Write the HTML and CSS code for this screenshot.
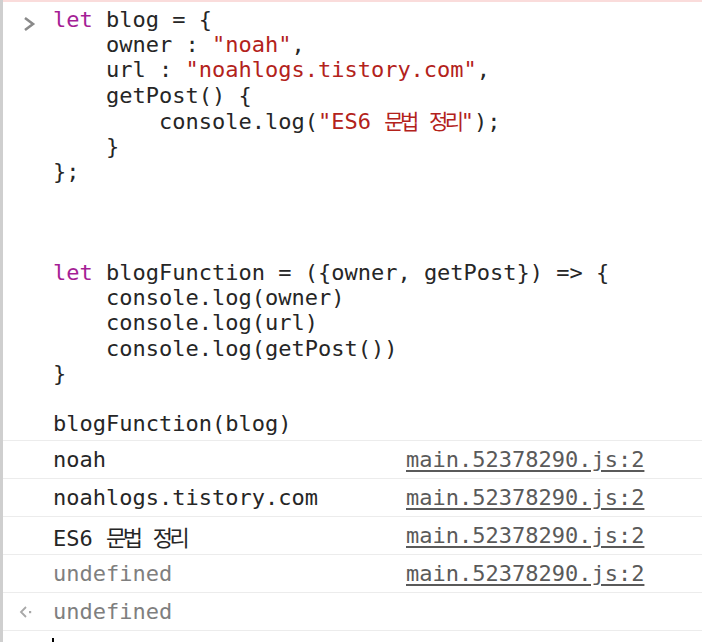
FILE: index.html
```html
<!DOCTYPE html>
<html lang="ko">
<head>
<meta charset="utf-8">
<link rel="stylesheet" href="styles.css">
</head>
<body>
<div class="console">
  <div class="input-group">
    <svg class="prompt" width="14" height="16" viewBox="0 0 14 16"><polyline points="2,2 10,8 2,14" fill="none" stroke="#8a8a8a" stroke-width="2.6"/></svg>
<pre class="code"><span class="kw">let</span> blog = {
    owner : <span class="str">"noah"</span>,
    url : <span class="str">"noahlogs.tistory.com"</span>,
    getPost() {
        console.log(<span class="str">"ES6 <span class="ko ko-code">문법</span> <span class="ko ko-code">정리</span>"</span>);
    }
};



<span class="kw">let</span> blogFunction = ({owner, getPost}) =&gt; {
    console.log(owner)
    console.log(url)
    console.log(getPost())
}

blogFunction(blog)</pre>
  </div>
  <div class="row"><span class="msg">noah</span><a class="src">main.52378290.js:2</a></div>
  <div class="row"><span class="msg">noahlogs.tistory.com</span><a class="src">main.52378290.js:2</a></div>
  <div class="row"><span class="msg">ES6 <span class="ko">문법</span> <span class="ko">정리</span></span><a class="src">main.52378290.js:2</a></div>
  <div class="row"><span class="msg undef">undefined</span><a class="src">main.52378290.js:2</a></div>
  <div class="row result">
    <svg class="ret" width="16" height="14" viewBox="0 0 16 14"><polyline points="7,2 2,7 7,12" fill="none" stroke="#a8a8a8" stroke-width="1.8"/><rect x="10" y="6" width="2.2" height="2.2" fill="#a8a8a8"/></svg>
    <span class="msg undef">undefined</span>
  </div>
  <div class="prompt-line"><span class="cursor"></span></div>
</div>
</body>
</html>
```
FILE: styles.css
```css
html, body {
  margin: 0;
  padding: 0;
  background: #fff;
}
body {
  width: 702px;
  height: 642px;
  overflow: hidden;
}
.console {
  border-left: 3px solid #cfcfcf;
  min-height: 642px;
  font-family: "DejaVu Sans Mono", "Noto Sans CJK KR", monospace;
  font-size: 22px;
  color: #262626;
}
.input-group {
  position: relative;
  border-top: 2px solid #fadcdb;
  border-bottom: 1px solid #ececec;
  padding: 5px 0 4px 50px;
}
.prompt {
  position: absolute;
  left: 20px;
  top: 14px;
}
.code {
  margin: 0;
  font: inherit;
  line-height: 25.2px;
  white-space: pre;
}
.kw { color: #a51e95; }
.str { color: #b3221b; }
.ko {
  font-family: "Noto Sans CJK KR", sans-serif;
  letter-spacing: -3.5px;
}
.ko-code {
  font-size: 21px;
  letter-spacing: -3.5px;
}
.row {
  position: relative;
  display: grid;
  grid-template-columns: 353px auto;
  align-items: center;
  height: 37px;
  padding-left: 50px;
  border-bottom: 1px solid #ececec;
}
.msg { white-space: pre; }
.undef { color: #7f7f7f; }
.src {
  color: #5a5a5a;
  text-decoration: underline;
  text-underline-offset: 3px;
}
.ret {
  position: absolute;
  left: 16px;
  top: 12px;
}
.prompt-line {
  position: relative;
  height: 12px;
  padding-left: 49px;
}
.cursor {
  display: block;
  width: 2px;
  height: 5px;
  margin-top: 7px;
  background: #000;
}
```
